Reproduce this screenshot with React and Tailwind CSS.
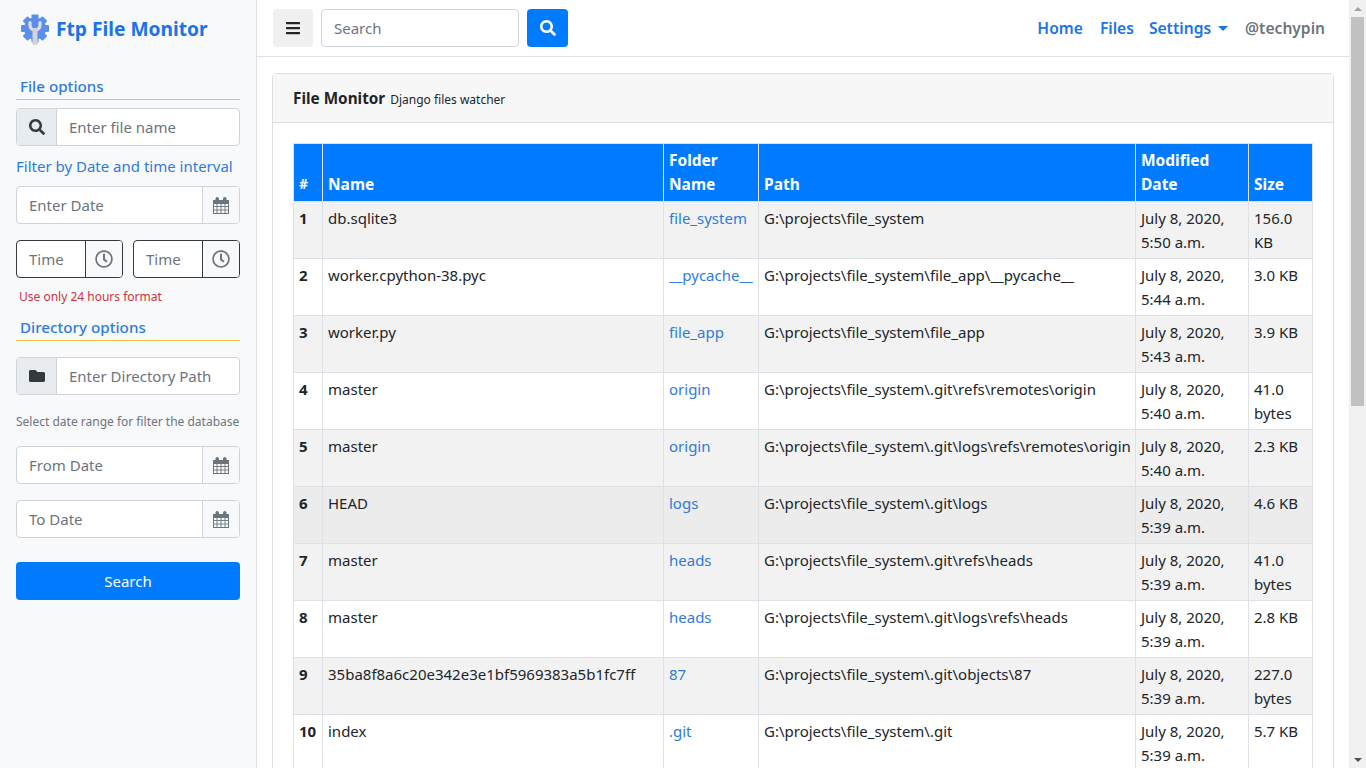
import { FaSearch, FaRegClock, FaFolder, FaBars } from "react-icons/fa"

const rows = [
  ["1", "db.sqlite3", "file_system", "G:\\projects\\file_system", "July 8, 2020, 5:50 a.m.", "156.0 KB"],
  ["2", "worker.cpython-38.pyc", "__pycache__", "G:\\projects\\file_system\\file_app\\__pycache__", "July 8, 2020, 5:44 a.m.", "3.0 KB"],
  ["3", "worker.py", "file_app", "G:\\projects\\file_system\\file_app", "July 8, 2020, 5:43 a.m.", "3.9 KB"],
  ["4", "master", "origin", "G:\\projects\\file_system\\.git\\refs\\remotes\\origin", "July 8, 2020, 5:40 a.m.", "41.0 bytes"],
  ["5", "master", "origin", "G:\\projects\\file_system\\.git\\logs\\refs\\remotes\\origin", "July 8, 2020, 5:40 a.m.", "2.3 KB"],
  ["6", "HEAD", "logs", "G:\\projects\\file_system\\.git\\logs", "July 8, 2020, 5:39 a.m.", "4.6 KB"],
  ["7", "master", "heads", "G:\\projects\\file_system\\.git\\refs\\heads", "July 8, 2020, 5:39 a.m.", "41.0 bytes"],
  ["8", "master", "heads", "G:\\projects\\file_system\\.git\\logs\\refs\\heads", "July 8, 2020, 5:39 a.m.", "2.8 KB"],
  ["9", "35ba8f8a6c20e342e3e1bf5969383a5b1fc7ff", "87", "G:\\projects\\file_system\\.git\\objects\\87", "July 8, 2020, 5:39 a.m.", "227.0 bytes"],
  ["10", "index", ".git", "G:\\projects\\file_system\\.git", "July 8, 2020, 5:39 a.m.", "5.7 KB"],
]

function SectionTitle({ children }) {
  return (
    <div className="border-b border-[#f0c040] pl-1 h-[24px] leading-[20px] text-[15.2px] font-medium text-[#2f7bdc]">
      {children}
    </div>
  )
}

function LeftIconInput({ icon, text }) {
  return (
    <div className="flex h-[38px] border border-[#ced4da] rounded bg-white overflow-hidden">
      <div className="w-[40px] shrink-0 flex items-center justify-center bg-[#e9ecef] border-r border-[#ced4da] text-[#343a40] text-[16px]">
        {icon}
      </div>
      <div className="pl-3 flex items-center text-[#6c757d]">{text}</div>
    </div>
  )
}

// the old font awesome calendar with the grid, react-icons only has the newer one
function CalendarIcon() {
  return (
    <svg width="16" height="17" viewBox="0 0 16 17" fill="none" stroke="#6c757d">
      <rect x="0.5" y="3.500" width="15" height="13" />
      <rect x="0.5" y="3.500" width="15" height="3" fill="#6c757d" />
      <path d="M0.500 9.500h15M0.500 13h15M4 6.500v10M8 6.500v10M12 6.500v10" strokeWidth="0.9" />
      <rect x="3" y="0.500" width="2.500" height="4.500" rx="1" fill="#6c757d" />
      <rect x="10.500" y="0.500" width="2.500" height="4.500" rx="1" fill="#6c757d" />
    </svg>
  )
}

function DateInput({ text }) {
  return (
    <div className="flex h-[38px] border border-[#ced4da] rounded bg-white overflow-hidden">
      <div className="flex-1 pl-3 flex items-center text-[#6c757d]">{text}</div>
      <div className="w-[37px] flex items-center justify-center bg-[#f8f9fa] border-l border-[#ced4da]">
        <CalendarIcon />
      </div>
    </div>
  )
}

function TimeInput() {
  return (
    <div className="flex w-[107px] h-[38px] border border-[#343a40] rounded bg-white overflow-hidden">
      <div className="flex-1 pl-3 flex items-center text-[#6c757d]">Time</div>
      <div className="w-[37px] flex items-center justify-center bg-[#f8f9fa] border-l border-[#343a40] text-[#6c757d] text-[18px]">
        <FaRegClock />
      </div>
    </div>
  )
}

function Logo() {
  const teeth = [0, 45, 90, 135, 180, 225, 270, 315]
  return (
    <svg width="28" height="31" viewBox="0 0 28 31" className="shrink-0">
      <g fill="#5b8fe8">
        <circle cx="14" cy="14.500" r="11" />
        {teeth.map((a) => (
          <rect key={a} x="10.500" y="0.500" width="7" height="7" rx="1" transform={`rotate(${a} 14 14.500)`} />
        ))}
      </g>
      <path d="M9 8.500v2.500c0 3 2 5 5 5s5-2 5-5V8.500" fill="none" stroke="#dcdee4" strokeWidth="3.200" strokeLinecap="round" />
      <rect x="11.500" y="14" width="5" height="17" rx="1.500" fill="#d2d4da" />
    </svg>
  )
}

function Sidebar() {
  return (
    <aside className="w-[257px] shrink-0 h-full bg-[#f8f9fa] border-r border-[#dee2e6] px-4">
      <div className="flex items-center gap-[7px] h-[58px] pl-[5px]">
        <Logo />
        <span className="text-[19.200px] font-bold text-[#1a73e8]">Ftp File Monitor</span>
      </div>
      <div className="mt-[18px]">
        <SectionTitle>File options</SectionTitle>
      </div>
      <div className="mt-[8px]">
        <LeftIconInput icon={<FaSearch />} text="Enter file name" />
      </div>
      <div className="mt-[8px] h-[24px] leading-[24px] text-[#2f7bdc] whitespace-nowrap">Filter by Date and time interval</div>
      <div className="mt-[8px]">
        <DateInput text="Enter Date" />
      </div>
      <div className="mt-[16px] flex justify-between">
        <TimeInput />
        <TimeInput />
      </div>
      <div className="mt-[10px] pl-[3px] h-[18px] leading-[18px] text-[12px] text-[#c8343f]">Use only 24 hours format</div>
      <div className="mt-[11px]">
        <SectionTitle>Directory options</SectionTitle>
      </div>
      <div className="mt-[16px]">
        <LeftIconInput icon={<FaFolder />} text="Enter Directory Path" />
      </div>
      <div className="mt-[18px] h-[18px] leading-[18px] text-[12px] text-[#6c757d] whitespace-nowrap">Select date range for filter the database</div>
      <div className="mt-[15px]">
        <DateInput text="From Date" />
      </div>
      <div className="mt-[16px]">
        <DateInput text="To Date" />
      </div>
      <div className="mt-[24px] h-[38px] rounded bg-[#007bff] text-white flex items-center justify-center">Search</div>
    </aside>
  )
}

function Topbar() {
  return (
    <header className="h-[57px] shrink-0 border-b border-[#dee2e6] bg-white flex items-center pl-4 pr-[24px]">
      <div className="w-[40px] h-[38px] rounded bg-[#f0f0f0] flex items-center justify-center text-[#212529] text-[16px]">
        <FaBars />
      </div>
      <div className="ml-2 w-[198px] h-[38px] border border-[#ced4da] rounded pl-3 flex items-center text-[#6c757d]">Search</div>
      <div className="ml-2 w-[41px] h-[38px] rounded bg-[#007bff] text-white flex items-center justify-center text-[16px]">
        <FaSearch />
      </div>
      <nav className="ml-auto pt-[2px] flex items-center text-[15.600px] font-semibold text-[#1a73e8]">
        <span className="mr-[17px]">Home</span>
        <span className="mr-[15px]">Files</span>
        <span className="mr-[17px] flex items-center">
          Settings
          <span className="ml-[7px] w-0 h-0 border-x-[5px] border-x-transparent border-t-[5px] border-t-[#1a73e8]"></span>
        </span>
        <span className="text-[#6c757d]">@techypin</span>
      </nav>
    </header>
  )
}

function FileTable() {
  return (
    <table className="w-[1019px] table-fixed border-collapse">
      <colgroup>
        <col className="w-[29px]" />
        <col className="w-[341px]" />
        <col className="w-[95px]" />
        <col className="w-[377px]" />
        <col className="w-[113px]" />
        <col className="w-[64px]" />
      </colgroup>
      <thead>
        <tr className="bg-[#007bff] text-white font-bold align-bottom text-[15.500px]">
          <th className="border border-[#dee2e6] px-[5px] pt-[4px] pb-[5px] text-left text-[14px] leading-[24px]">#</th>
          <th className="border border-[#dee2e6] px-[5px] pt-[4px] pb-[5px] text-left leading-[24px]">Name</th>
          <th className="border border-[#dee2e6] px-[5px] pt-[4px] pb-[5px] text-left leading-[24px]">Folder Name</th>
          <th className="border border-[#dee2e6] px-[5px] pt-[4px] pb-[5px] text-left leading-[24px]">Path</th>
          <th className="border border-[#dee2e6] px-[5px] pt-[4px] pb-[5px] text-left leading-[24px]">Modified Date</th>
          <th className="border border-[#dee2e6] px-[5px] pt-[4px] pb-[5px] text-left leading-[24px]">Size</th>
        </tr>
      </thead>
      <tbody>
        {rows.map((r, i) => (
          <tr key={r[0]} className={i === 5 ? "bg-[#ececec]" : i % 2 === 0 ? "bg-[#f2f2f2]" : "bg-white"}>
            <td className="border border-[#dee2e6] px-[5px] py-[4px] align-top leading-[24px] font-bold">{r[0]}</td>
            <td className="border border-[#dee2e6] px-[5px] py-[4px] align-top leading-[24px] whitespace-nowrap">{r[1]}</td>
            <td className="border border-[#dee2e6] px-[5px] py-[4px] align-top leading-[24px] text-[#2f7bdc]">{r[2]}</td>
            <td className="border border-[#dee2e6] px-[5px] py-[4px] align-top leading-[24px] whitespace-nowrap">{r[3]}</td>
            <td className="border border-[#dee2e6] px-[5px] py-[4px] align-top leading-[24px]">{r[4]}</td>
            <td className="border border-[#dee2e6] px-[5px] py-[4px] align-top leading-[24px]">{r[5]}</td>
          </tr>
        ))}
      </tbody>
    </table>
  )
}

function Scrollbar() {
  return (
    <div className="w-[17px] shrink-0 h-full bg-[#f1f1f1] flex flex-col items-center">
      <div className="h-[17px] flex items-center justify-center">
        <span className="w-0 h-0 border-x-[4px] border-x-transparent border-b-[4px] border-b-[#a3a3a3]"></span>
      </div>
      <div className="w-[13px] h-[389px] bg-[#c1c1c1]"></div>
      <div className="mt-auto h-[17px] flex items-center justify-center">
        <span className="w-0 h-0 border-x-[4px] border-x-transparent border-t-[4px] border-t-[#505050]"></span>
      </div>
    </div>
  )
}

export default function App() {
  return (
    <div className="flex h-screen overflow-hidden bg-white text-[15px] text-[#212529] font-['Noto_Sans',sans-serif]">
      <Sidebar />
      <main className="flex-1 min-w-0 flex flex-col overflow-hidden">
        <Topbar />
        <div className="px-[15px] pt-[16px] flex-1 overflow-hidden">
          <div className="border border-[#dfdfdf] rounded h-[800px]">
            <div className="h-[49px] bg-[#f7f7f7] border-b border-[#dfdfdf] flex items-baseline pl-5 pt-[13px]">
              <span className="font-bold text-[15.300px]">File Monitor</span>
              <span className="ml-[5px] text-[12px]">Django files watcher</span>
            </div>
            <div className="pl-5 pt-5">
              <FileTable />
            </div>
          </div>
        </div>
      </main>
      <Scrollbar />
    </div>
  )
}
